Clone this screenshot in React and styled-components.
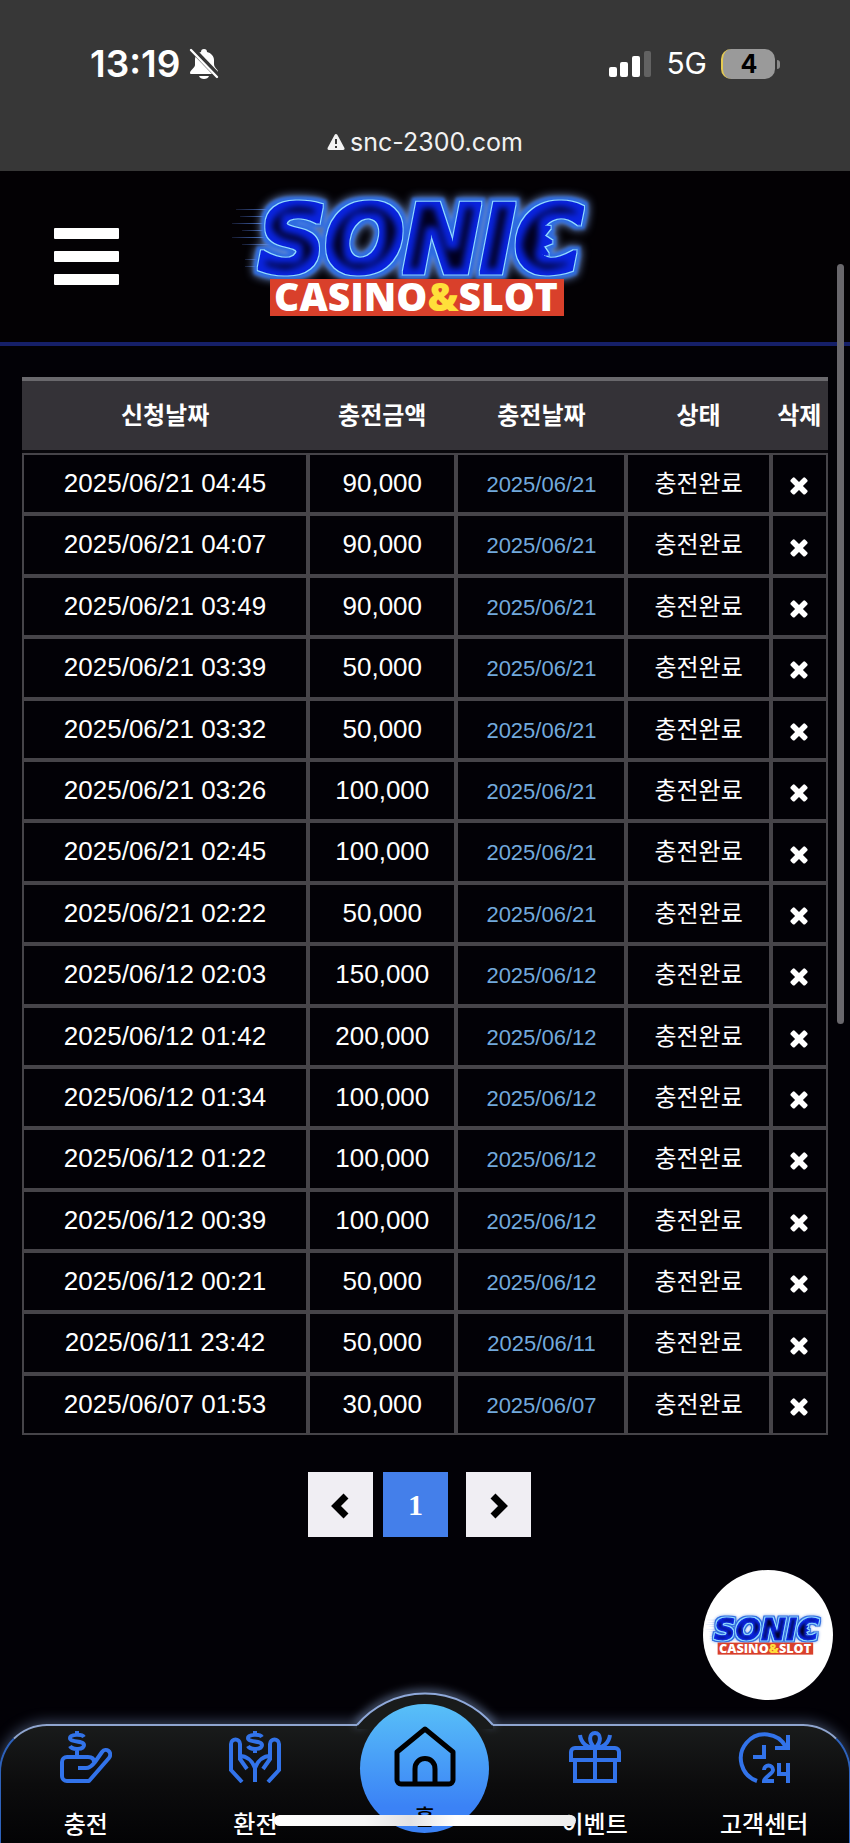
import React, { useId } from "react";
import styled, { createGlobalStyle } from "styled-components";

const GlobalStyle = createGlobalStyle`
  * {
    box-sizing: border-box;
  }
  body {
    margin: 0;
    background: #020106;
    color: #fff;
    font-family: "Liberation Sans", "Noto Sans CJK KR", sans-serif;
  }
  button {
    font: inherit;
    border: 0;
    padding: 0;
    cursor: pointer;
  }
  a {
    color: inherit;
    text-decoration: none;
  }
`;

const Page = styled.div`
  display: flex;
  flex-direction: column;
  min-height: 100vh;
  position: relative;
  overflow: hidden;
`;

/* browser chrome */

const StatusArea = styled.div`
  background: #373737;
  font-family: Inter, sans-serif;
  padding: 42px 70px 13px 90px;
`;

const StatusRow = styled.div`
  display: flex;
  align-items: center;
  justify-content: space-between;
  height: 43px;
`;

const StatusGroup = styled.div`
  display: flex;
  align-items: center;
  gap: ${(props) => props.$gap}px;
`;

const Clock = styled.span`
  font-size: 37px;
  font-weight: 600;
  line-height: 43px;
`;

const Network = styled.span`
  font-size: 30px;
  line-height: 43px;
`;

const Battery = styled.span`
  position: relative;
  width: 54px;
  height: 30px;
  border-radius: 10px;
  border-left: 2px solid #e5cb52;
  background: #9a9a9a;
  color: #000;
  font-size: 25px;
  font-weight: 700;
  line-height: 30px;
  text-align: center;
  margin-right: 5px;
  &::after {
    content: "";
    position: absolute;
    right: -5px;
    top: 11px;
    width: 3px;
    height: 9px;
    border-radius: 0 4px 4px 0;
    background: #8a8a8a;
  }
`;

const AddressBar = styled.div`
  display: flex;
  align-items: center;
  justify-content: center;
  gap: 5px;
  margin: 41px -70px 0 -90px;
  font-size: 25px;
  line-height: 32px;
  color: #f2f2f2;
`;

/* site header */

const Header = styled.header`
  display: grid;
  grid-template-columns: 1fr 400px 1fr;
  align-items: center;
  padding: 20px 0 21px;
  background: #030104;
  border-bottom: 4px solid #151f68;
`;

const MenuButton = styled.button`
  display: flex;
  flex-direction: column;
  gap: 12px;
  width: 65px;
  margin-left: 54px;
  background: none;
`;

const MenuBar = styled.span`
  width: 100%;
  height: 11px;
  border-radius: 1px;
  background: #fff;
`;

const LogoLink = styled.a`
  display: block;
`;

const LogoSvg = styled.svg`
  display: block;
  width: 100%;
  overflow: visible;
`;

/* history table */

const Main = styled.main`
  flex: 1;
  padding: 31px 22px 185px;
`;

const Table = styled.table`
  width: 100%;
  table-layout: fixed;
  border-collapse: separate;
  border-spacing: 0;
  text-align: center;
`;

const Col = styled.col`
  width: ${(props) => props.$width};
`;

const Th = styled.th`
  height: 76px;
  padding: 0;
  border-top: 4px solid #69686c;
  border-bottom: 3px solid #08070b;
  background: #343237;
  font-size: 24px;
  font-weight: 700;
  line-height: 36px;
  white-space: nowrap;
`;

const Td = styled.td`
  padding: 10px 0 11px;
  border: 2px solid #464449;
  font-size: 26px;
  line-height: 1.4;
  white-space: nowrap;
`;

const PaidDate = styled.span`
  font-size: 22px;
  line-height: 1;
  color: #72a9dc;
`;

const Status = styled.span`
  font-size: 24px;
  line-height: 1;
`;

const DeleteButton = styled.button`
  display: block;
  margin: 4px auto 0;
  background: none;
  color: #fff;
  svg {
    display: block;
  }
`;

const Pagination = styled.nav`
  display: flex;
  justify-content: center;
  margin-top: 37px;
  padding-right: 11px;
`;

const PageButton = styled.button`
  display: flex;
  align-items: center;
  justify-content: center;
  width: 65px;
  height: 65px;
  margin-right: ${(props) => (props.$current ? 18 : props.$last ? 0 : 10)}px;
  background: ${(props) => (props.$current ? "#447fea" : "#f0eef3")};
  color: ${(props) => (props.$current ? "#fff" : "#000")};
  font-family: "Liberation Serif", serif;
  font-size: 30px;
  font-weight: 700;
`;

/* floating pieces */

const ChatButton = styled.a`
  position: absolute;
  right: 17px;
  bottom: 143px;
  display: flex;
  align-items: center;
  width: 130px;
  height: 130px;
  border-radius: 50%;
  background: #fff;
`;

const ScrollThumb = styled.div`
  position: absolute;
  top: 264px;
  right: 6px;
  width: 7px;
  height: 760px;
  border-radius: 4px;
  background: #69676c;
`;

const HomeIndicator = styled.div`
  position: absolute;
  left: 50%;
  bottom: 17px;
  width: 302px;
  height: 11px;
  border-radius: 6px;
  transform: translateX(-50%);
  background: linear-gradient(90deg, #fff, #f6f6f6 30%, #e2e2e4 45%, #fff 60%, #ededed);
`;

/* bottom navigation */

const BottomNav = styled.nav`
  position: relative;
  display: grid;
  grid-template-columns: repeat(5, 1fr);
  height: 119px;
  margin: 0 -1px;
  border: 2px solid #2e62bb;
  border-top-color: #8fa5cf;
  border-bottom: 0;
  border-radius: 48px 48px 0 0;
  background: linear-gradient(#191b1b, #0c0c0d 50%, #030305);
  box-shadow: 0 -2px 14px rgba(150, 180, 230, 0.4);
`;

const Hump = styled.svg`
  position: absolute;
  left: 50%;
  top: -53px;
  transform: translateX(-50%);
`;

const NavLink = styled.a`
  display: flex;
  flex-direction: column;
  align-items: center;
  gap: 28px;
  padding-top: 5px;
  color: #fff;
  font-size: 24px;
  font-weight: 500;
  line-height: 28px;
  svg {
    flex: none;
    color: #3273ea;
  }
`;

const HomeLink = styled.a`
  position: relative;
  justify-self: center;
  display: flex;
  flex-direction: column;
  align-items: center;
  gap: 16px;
  width: 129px;
  height: 129px;
  margin-top: -22px;
  padding-top: 22px;
  border-radius: 50%;
  background: linear-gradient(#58c0f8, #3b82f6 80%);
  color: #000;
  font-size: 22px;
  font-weight: 500;
  line-height: 28px;
`;

const Logo = () => {
  const id = useId().replace(/[^a-zA-Z0-9]/g, "");
  return (
    <LogoSvg viewBox="5 11 400 130" role="img" aria-label="SONIC CASINO&SLOT">
      <defs>
        {/* glow, blue halo, light outline, blue face, dark core */}
        <filter id={`neon${id}`} x="-15%" y="-30%" width="130%" height="160%" colorInterpolationFilters="sRGB">
          <feMorphology in="SourceAlpha" operator="dilate" radius="5" result="wide" />
          <feGaussianBlur in="wide" stdDeviation="5" result="wideBlur" />
          <feFlood floodColor="#7fa4e8" />
          <feComposite in2="wideBlur" operator="in" result="glow" />
          <feGaussianBlur in="wide" stdDeviation="1.5" result="haloBlur" />
          <feFlood floodColor="#2f6ce0" />
          <feComposite in2="haloBlur" operator="in" result="halo" />
          <feMorphology in="SourceAlpha" operator="dilate" radius="2" result="edge" />
          <feFlood floodColor="#93dcff" />
          <feComposite in2="edge" operator="in" result="outline" />
          <feMorphology in="SourceAlpha" operator="dilate" radius="1" result="inner" />
          <feFlood floodColor="#0a24e0" />
          <feComposite in2="inner" operator="in" result="face" />
          <feMorphology in="SourceAlpha" operator="erode" radius="5" result="thin" />
          <feGaussianBlur in="thin" stdDeviation="3" result="thinBlur" />
          <feFlood floodColor="#01001f" />
          <feComposite in2="thinBlur" operator="in" result="core" />
          <feMerge>
            <feMergeNode in="glow" />
            <feMergeNode in="halo" />
            <feMergeNode in="outline" />
            <feMergeNode in="face" />
            <feMergeNode in="core" />
          </feMerge>
        </filter>
        <linearGradient id={`speed${id}`} x1="0" x2="1">
          <stop offset="0" stopColor="#5c7fe0" stopOpacity="0.2" />
          <stop offset="1" stopColor="#4c8af2" />
        </linearGradient>
      </defs>
      <g fill={`url(#speed${id})`}>
        <rect x="16" y="29" width="44" height="1" />
        <rect x="20" y="36" width="34" height="1" />
        <rect x="12" y="43" width="40" height="1" />
        <rect x="22" y="50" width="30" height="1" />
        <rect x="12" y="57" width="40" height="1" />
        <rect x="22" y="64" width="36" height="1" />
        <rect x="25" y="79" width="20" height="1" />
        <rect x="25" y="86" width="20" height="1" />
      </g>
      <g filter={`url(#neon${id})`}>
        <text
          x="39"
          y="92"
          fontFamily="DejaVu Sans, sans-serif"
          fontStyle="italic"
          fontWeight="700"
          fontSize="92"
          stroke="#000"
          strokeWidth="3"
        >
          SONIC
        </text>
        <path d="M318 46l12 1-7 9 9 6-10 4 6 9-16-4z" />
      </g>
      <rect x="50" y="99" width="294" height="37" fill="#d9402b" />
      <text
        x="196"
        y="131"
        textAnchor="middle"
        fontFamily="Open Sans, sans-serif"
        fontWeight="800"
        fontSize="39"
        fill="#fff"
      >
        CASINO<tspan fill="#ffe03a">&amp;</tspan>SLOT
      </text>
    </LogoSvg>
  );
};

const BellOffIcon = () => (
  <svg width="30" height="32" viewBox="0 0 30 32" aria-hidden="true">
    <path
      d="M15 1c-2 0-3 1-3 3C8 5 6 8 6 12v5c0 3-5 5-5 8 0 1 1 1 2 1h25c1 0 1-1 1-2 0-3-4-4-4-8v-4c0-4-3-7-7-8 0-2-1-3-3-3z"
      fill="#fff"
    />
    <path d="M10 28h10c-1 4-9 4-10 0z" fill="#fff" />
    <path d="M3 1l27 28" stroke="#373737" strokeWidth="6" />
    <path d="M2 2l26 27" stroke="#fff" strokeWidth="2.4" strokeLinecap="round" />
  </svg>
);

const SignalIcon = () => (
  <svg width="43" height="28" viewBox="0 0 43 28" fill="#fff" aria-hidden="true">
    <rect x="0" y="17" width="8" height="10" rx="2" />
    <rect x="11" y="12" width="8" height="15" rx="2" />
    <rect x="23" y="6" width="8" height="21" rx="2" />
    <rect x="35" y="1" width="7" height="26" rx="2" fill="#626262" />
  </svg>
);

const WarningIcon = () => (
  <svg width="18" height="18" viewBox="0 0 18 18" aria-hidden="true">
    <path d="M9 2.5L16 15.5H2z" fill="#f2f2f2" stroke="#f2f2f2" strokeWidth="3" strokeLinejoin="round" />
    <path d="M9 6v5M9 13v2" stroke="#373737" strokeWidth="2" />
  </svg>
);

const CloseIcon = () => (
  <svg width="26" height="26" viewBox="0 0 1792 1792" fill="currentColor" aria-hidden="true">
    <path d="M1490 1322q0 40-28 68l-136 136q-28 28-68 28t-68-28l-294-294-294 294q-28 28-68 28t-68-28l-136-136q-28-28-28-68t28-68l294-294-294-294q-28-28-28-68t28-68l136-136q28-28 68-28t68 28l294 294 294-294q28-28 68-28t68 28l136 136q28 28 28 68t-28 68l-294 294 294 294q28 28 28 68z" />
  </svg>
);

const ChevronIcon = ({ direction }) => (
  <svg width="20" height="36" viewBox="0 0 20 36" aria-hidden="true">
    <path
      d={direction === "left" ? "M15 9L5 19l10 10" : "M4 9l10 10L4 29"}
      fill="none"
      stroke="currentColor"
      strokeWidth="7"
    />
  </svg>
);

const NavIcon = ({ children }) => (
  <svg
    width="52"
    height="52"
    viewBox="0 0 52 52"
    fill="none"
    stroke="currentColor"
    strokeWidth="4"
    aria-hidden="true"
  >
    {children}
  </svg>
);

/* S curve with a short bar above and below */
const Coin = ({ x }) => (
  <path d={`M${x + 7} 6c-2-3-14-3-14 1 0 5 14 2 14 7 0 5-12 5-14 1M${x} 0v4M${x} 18v4`} />
);

const DepositIcon = () => (
  <NavIcon>
    <Coin x={17} />
    <path
      d="M18 37h8c4 0 6-2 9-6l7-10c4-5 11 0 7 6L29 50H7a5 5 0 0 1-5-5V31a5 5 0 0 1 5-5h21c4 0 6 2 6 5M17 20v6"
      strokeLinejoin="round"
    />
  </NavIcon>
);

const WithdrawIcon = () => (
  <NavIcon>
    <Coin x={26} />
    <path d="M13 51L2 39V13c0-6 9-6 9 0v15l7 10M11 25c6 0 12 4 15 12v14" />
    <path d="M39 51l11-12V13c0-6-9-6-9 0v15l-7 10M41 25c-6 0-12 4-15 12" />
  </NavIcon>
);

const EventIcon = () => (
  <NavIcon>
    <path d="M2 29v-8a4 4 0 0 1 4-4h40a4 4 0 0 1 4 4v8zM6 29v21h40V29M26 17v33" />
    <path d="M26 17c-7-6-6-15 0-15s7 9 0 15M26 17c-8 0-14-5-15-13M26 17c8 0 14-5 15-13" />
  </NavIcon>
);

const SupportIcon = () => (
  <NavIcon>
    <path d="M19 50A24 24 0 1 1 48 16" />
    <path d="M50 4v13H37M26 14v12H15" />
    <path d="M26 39c0-6 9-6 9 0 0 4-9 7-9 11h10M41 32v11h10M50 32v20" />
  </NavIcon>
);

const HomeIcon = () => (
  <svg width="62" height="62" viewBox="0 0 62 62" fill="none" stroke="#000" strokeWidth="5" aria-hidden="true">
    <path d="M31 3L3 26v28a4 4 0 0 0 4 4h48a4 4 0 0 0 4-4V26z" strokeLinejoin="round" />
    <path d="M21 58V43c0-14 20-14 20 0v15" />
  </svg>
);

const NavHump = () => (
  <Hump width="180" height="70" viewBox="0 0 180 70" aria-hidden="true">
    <defs>
      <filter id="humpGlow" x="-10%" y="-50%" width="120%" height="200%">
        <feGaussianBlur stdDeviation="5" />
      </filter>
    </defs>
    <path
      d="M22 52A89 89 0 0 1 158 52"
      fill="none"
      stroke="#8fa9da"
      strokeOpacity="0.7"
      strokeWidth="6"
      filter="url(#humpGlow)"
    />
    <path d="M22 52A89 89 0 0 1 158 52V56H22z" fill="#191b1b" />
    <path d="M22 52A89 89 0 0 1 158 52" fill="none" stroke="#8fa9da" strokeWidth="2" />
  </Hump>
);

const columns = [
  { title: "신청날짜", width: "35.5%" },
  { title: "충전금액", width: "18.4%" },
  { title: "충전날짜", width: "21.1%" },
  { title: "상태", width: "17.9%" },
  { title: "삭제", width: "7.1%" },
];

const deposits = [
  ["2025/06/21", "04:45", "90,000"],
  ["2025/06/21", "04:07", "90,000"],
  ["2025/06/21", "03:49", "90,000"],
  ["2025/06/21", "03:39", "50,000"],
  ["2025/06/21", "03:32", "50,000"],
  ["2025/06/21", "03:26", "100,000"],
  ["2025/06/21", "02:45", "100,000"],
  ["2025/06/21", "02:22", "50,000"],
  ["2025/06/12", "02:03", "150,000"],
  ["2025/06/12", "01:42", "200,000"],
  ["2025/06/12", "01:34", "100,000"],
  ["2025/06/12", "01:22", "100,000"],
  ["2025/06/12", "00:39", "100,000"],
  ["2025/06/12", "00:21", "50,000"],
  ["2025/06/11", "23:42", "50,000"],
  ["2025/06/07", "01:53", "30,000"],
];

const DepositTable = () => (
  <Table>
    <colgroup>
      {columns.map((column) => (
        <Col key={column.title} $width={column.width} />
      ))}
    </colgroup>
    <thead>
      <tr>
        {columns.map((column) => (
          <Th key={column.title} scope="col">
            {column.title}
          </Th>
        ))}
      </tr>
    </thead>
    <tbody>
      {deposits.map(([date, time, amount]) => (
        <tr key={date + time}>
          <Td>
            {date} {time}
          </Td>
          <Td>{amount}</Td>
          <Td>
            <PaidDate>{date}</PaidDate>
          </Td>
          <Td>
            <Status>충전완료</Status>
          </Td>
          <Td>
            <DeleteButton type="button" aria-label="삭제">
              <CloseIcon />
            </DeleteButton>
          </Td>
        </tr>
      ))}
    </tbody>
  </Table>
);

const App = () => {
  return (
    <>
      <GlobalStyle />
      <Page>
        <StatusArea>
          <StatusRow>
            <StatusGroup $gap={9}>
              <Clock>13:19</Clock>
              <BellOffIcon />
            </StatusGroup>
            <StatusGroup $gap={14}>
              <SignalIcon />
              <Network>5G</Network>
              <Battery>4</Battery>
            </StatusGroup>
          </StatusRow>
          <AddressBar>
            <WarningIcon />
            <span>snc-2300.com</span>
          </AddressBar>
        </StatusArea>

        <Header>
          <MenuButton type="button" aria-label="메뉴">
            <MenuBar />
            <MenuBar />
            <MenuBar />
          </MenuButton>
          <LogoLink href="#home">
            <Logo />
          </LogoLink>
        </Header>

        <Main>
          <DepositTable />
          <Pagination aria-label="페이지">
            <PageButton type="button" aria-label="이전">
              <ChevronIcon direction="left" />
            </PageButton>
            <PageButton type="button" $current aria-current="page">
              1
            </PageButton>
            <PageButton type="button" $last aria-label="다음">
              <ChevronIcon direction="right" />
            </PageButton>
          </Pagination>
        </Main>

        <BottomNav>
          <NavHump />
          <NavLink href="#deposit">
            <DepositIcon />
            충전
          </NavLink>
          <NavLink href="#withdraw">
            <WithdrawIcon />
            환전
          </NavLink>
          <HomeLink href="#home">
            <HomeIcon />
            홈
          </HomeLink>
          <NavLink href="#event">
            <EventIcon />
            이벤트
          </NavLink>
          <NavLink href="#support">
            <SupportIcon />
            고객센터
          </NavLink>
        </BottomNav>

        <ChatButton href="#chat">
          <Logo />
        </ChatButton>
        <ScrollThumb />
        <HomeIndicator />
      </Page>
    </>
  );
};

export default App;
